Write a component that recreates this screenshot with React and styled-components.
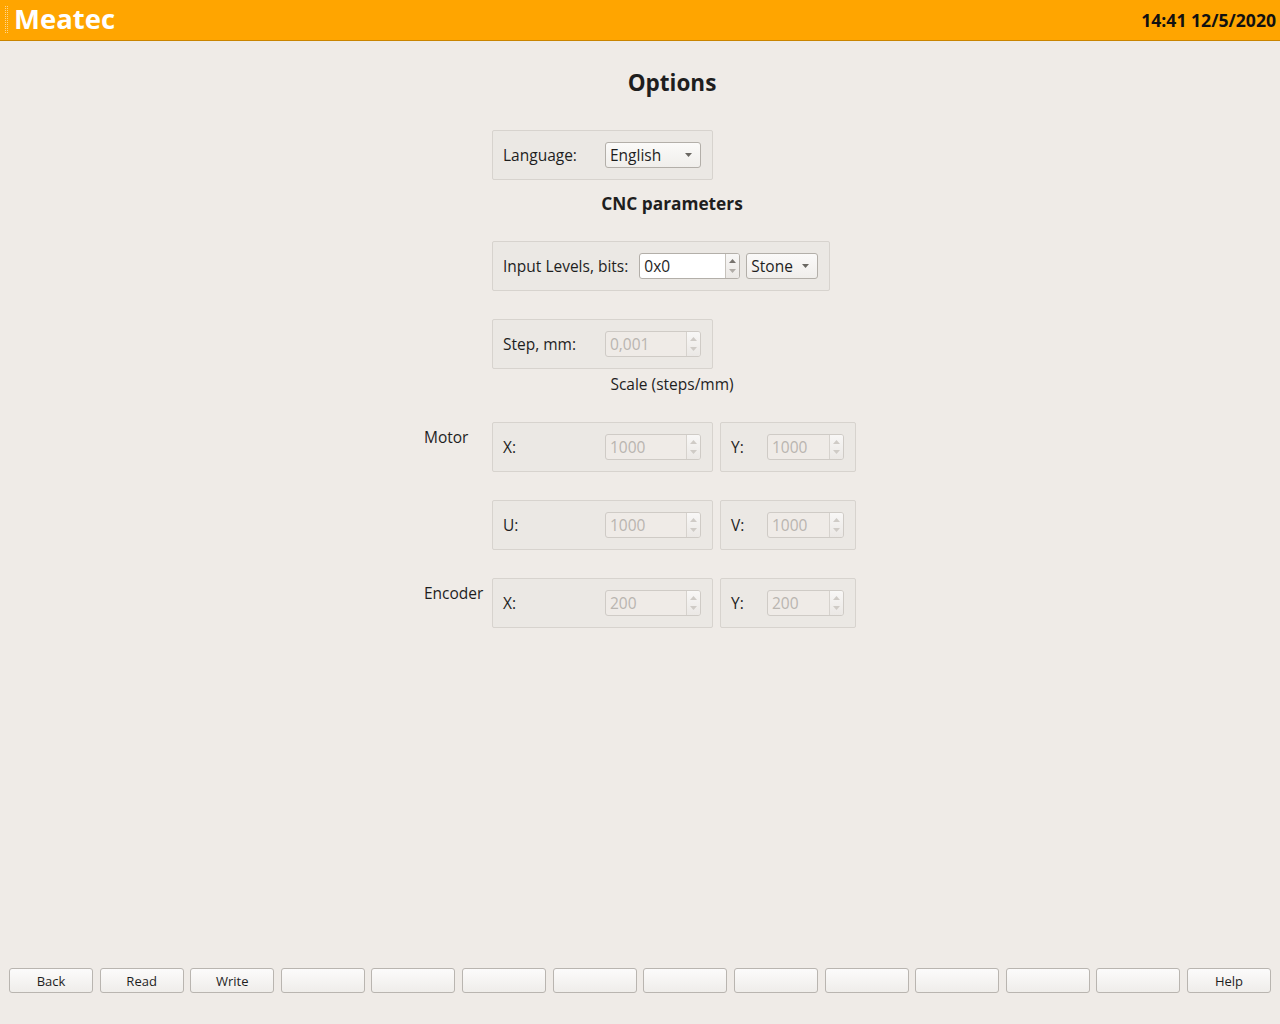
import React from "react";
import styled, { createGlobalStyle } from "styled-components";

const Global = createGlobalStyle`
  html, body { margin: 0; padding: 0; }
  body {
    background: #efebe7;
    font-family: "Open Sans", "DejaVu Sans", sans-serif;
    color: #1e1e1e;
  }
  #root { width: 1280px; height: 1024px; }
`;

const Page = styled.div`
  width: 1280px;
  height: 1024px;
  display: flex;
  flex-direction: column;
  background: #efebe7;
`;

const Header = styled.header`
  height: 40px;
  background: #ffa500;
  border-bottom: 1px solid #c98400;
  display: flex;
  align-items: center;
  padding: 0 4px 0 5px;
  box-sizing: content-box;
`;

const GripSvg = styled.svg`
  margin-right: 5px;
  flex: none;
`;

const Grip = () => (
  <GripSvg width="4" height="28" viewBox="0 0 4 28">
    {Array.from({ length: 14 }).map((_, r) =>
      [0, 2].map(c => (
        <rect key={`${r}-${c}`} x={c} y={r * 2} width="1" height="1" fill="#ffd58a" />
      ))
    )}
  </GripSvg>
);

const Brand = styled.div`
  color: #ffffff;
  font-size: 27.5px;
  font-weight: 700;
  flex: 1;
  line-height: 1;
  padding-bottom: 2px;
`;

const Clock = styled.div`
  font-size: 17.6px;
  font-weight: 700;
  color: #111;
`;

const Content = styled.main`
  flex: 1;
  display: flex;
  flex-direction: column;
  padding-left: 424px;
  width: 496px;
`;

const Title = styled.h1`
  margin: 0;
  text-align: center;
  font-size: 22.5px;
  font-weight: 700;
  line-height: 30px;
  margin-top: ${p => p.$top}px;
`;

const SubTitle = styled.h2`
  margin: 0;
  text-align: center;
  font-size: 17.3px;
  font-weight: 700;
  line-height: 24px;
  margin-top: ${p => p.$top}px;
`;

const Caption = styled.div`
  text-align: center;
  font-size: 15.5px;
  line-height: 22px;
  margin-top: ${p => p.$top}px;
`;

const Row = styled.div`
  display: grid;
  grid-template-columns: 61px 221px 136px;
  column-gap: 7px;
  align-items: start;
  margin-top: ${p => p.$top}px;
`;

const RowLabel = styled.div`
  font-size: 15.5px;
  line-height: 22px;
  padding-top: 4px;
  white-space: nowrap;
`;

const Group = styled.div`
  box-sizing: border-box;
  height: 50px;
  border: 1px solid #d7d3ce;
  border-radius: 2px;
  background: #ebe8e4;
  display: flex;
  align-items: center;
  padding: 0 11px 0 10px;
  ${p => p.$wide ? "grid-column: 2 / 4; justify-self: start;" : ""}
`;

const Label = styled.span`
  font-size: 15.5px;
  line-height: 20px;
  flex: ${p => (p.$grow ? 1 : "none")};
  white-space: nowrap;
`;

const SpinWrap = styled.div`
  box-sizing: border-box;
  width: ${p => p.$w}px;
  height: 26px;
  display: flex;
  border: 1px solid ${p => (p.$disabled ? "#cfcbc6" : "#b3afa9")};
  border-radius: 3px;
  background: ${p => (p.$disabled ? "#efebe7" : "#ffffff")};
  margin-left: ${p => p.$ml ?? 0}px;
  overflow: hidden;
`;

const SpinText = styled.div`
  flex: 1;
  font-size: 15.5px;
  line-height: 24px;
  padding-left: 4px;
  color: ${p => (p.$disabled ? "#b9b5b0" : "#1e1e1e")};
`;

const SpinArrows = styled.div`
  width: 13px;
  border-left: 1px solid ${p => (p.$disabled ? "#d6d2cd" : "#c6c2bc")};
  background: linear-gradient(#f8f7f6, #ebe8e5);
  display: flex;
  flex-direction: column;
  align-items: center;
  justify-content: center;
  gap: 6px;
`;

const Combo = styled.div`
  box-sizing: border-box;
  height: 26px;
  width: ${p => p.$w}px;
  border: 1px solid #b3afa9;
  border-radius: 3px;
  background: linear-gradient(#fbfaf9, #f0eeeb);
  display: flex;
  align-items: center;
  padding: 0 8px 0 4px;
  font-size: 15.5px;
  margin-left: ${p => p.$ml ?? 0}px;
`;

const ComboText = styled.span`
  flex: 1;
`;

const Tri = ({ up, color = "#6a6762" }) => (
  <svg width="7" height="4" viewBox="0 0 7 4">
    {up ? <path d="M0 4 L3.5 0 L7 4 Z" fill={color} /> : <path d="M0 0 L7 0 L3.5 4 Z" fill={color} />}
  </svg>
);

const Spin = ({ value, w, disabled, ml }) => (
  <SpinWrap $w={w} $disabled={disabled} $ml={ml}>
    <SpinText $disabled={disabled}>{value}</SpinText>
    <SpinArrows $disabled={disabled}>
      <Tri up color={disabled ? "#cfcbc6" : "#77736e"} />
      <Tri color={disabled ? "#cfcbc6" : "#b0aca7"} />
    </SpinArrows>
  </SpinWrap>
);

const Select = ({ value, w, ml }) => (
  <Combo $w={w} $ml={ml}>
    <ComboText>{value}</ComboText>
    <Tri />
  </Combo>
);

const Footer = styled.footer`
  display: grid;
  grid-template-columns: repeat(14, 1fr);
  column-gap: 6.6px;
  padding: 0 9px 31px 9px;
`;

const Btn = styled.button`
  height: 25px;
  box-sizing: border-box;
  border: 1px solid #b9b5b0;
  border-radius: 3px;
  background: linear-gradient(#fcfbfb, #efedea);
  font-family: "Open Sans", "DejaVu Sans", sans-serif;
  font-size: 13px;
  color: #1e1e1e;
  padding: 0;
`;

const buttons = ["Back", "Read", "Write", "", "", "", "", "", "", "", "", "", "", "Help"];

export default function App() {
  return (
    <Page>
      <Global />
      <Header>
        <Grip />
        <Brand>Meatec</Brand>
        <Clock>14:41 12/5/2020</Clock>
      </Header>
      <Content>
        <Title $top={27}>Options</Title>
        <Row $top={32}>
          <div />
          <Group>
            <Label $grow>Language:</Label>
            <Select value="English" w={96} />
          </Group>
        </Row>
        <SubTitle $top={12}>CNC parameters</SubTitle>
        <Row $top={25}>
          <div />
          <Group $wide>
            <Label>Input Levels, bits:</Label>
            <Spin value="0x0" w={101} ml={11} />
            <Select value="Stone" w={72} ml={6} />
          </Group>
        </Row>
        <Row $top={28}>
          <div />
          <Group>
            <Label $grow>Step, mm:</Label>
            <Spin value="0,001" w={96} disabled />
          </Group>
        </Row>
        <Caption $top={4}>Scale (steps/mm)</Caption>
        <Row $top={27}>
          <RowLabel>Motor</RowLabel>
          <Group>
            <Label $grow>X:</Label>
            <Spin value="1000" w={96} disabled />
          </Group>
          <Group>
            <Label $grow>Y:</Label>
            <Spin value="1000" w={77} disabled />
          </Group>
        </Row>
        <Row $top={28}>
          <div />
          <Group>
            <Label $grow>U:</Label>
            <Spin value="1000" w={96} disabled />
          </Group>
          <Group>
            <Label $grow>V:</Label>
            <Spin value="1000" w={77} disabled />
          </Group>
        </Row>
        <Row $top={28}>
          <RowLabel>Encoder</RowLabel>
          <Group>
            <Label $grow>X:</Label>
            <Spin value="200" w={96} disabled />
          </Group>
          <Group>
            <Label $grow>Y:</Label>
            <Spin value="200" w={77} disabled />
          </Group>
        </Row>
      </Content>
      <Footer>
        {buttons.map((b, i) => (
          <Btn key={i}>{b}</Btn>
        ))}
      </Footer>
    </Page>
  );
}
